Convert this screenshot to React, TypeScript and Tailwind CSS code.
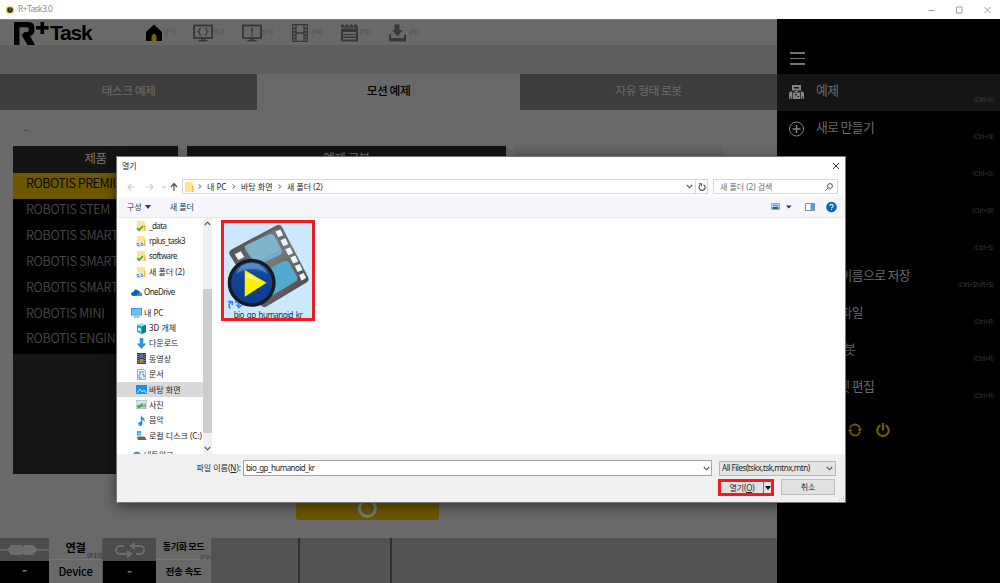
import React from "react";

const KR = "font-['Noto_Sans_CJK_KR','Noto_Sans',sans-serif]";
const UI = "font-['Noto_Sans','Noto_Sans_CJK_KR',sans-serif]";

function TitleBar() {
  return (
    <header className={`flex h-[19px] shrink-0 items-center bg-white ${UI}`}>
      <svg className="ml-[6px] h-[8px] w-[8px]" viewBox="0 0 8 8">
        <rect y="0.5" width="8" height="7" rx="2" fill="#f0d040" />
        <circle cx="4" cy="4" r="2.8" fill="#23262c" />
        <path d="M3.4 3h2M3.4 4.4h1.2" stroke="#bbb" strokeWidth=".8" />
      </svg>
      <span className="ml-[4px] whitespace-nowrap text-[8.5px] leading-none tracking-[-0.6px] text-[#8d8d8d]">R+Task3.0</span>
      <svg className="ml-auto h-[10px] w-[72px]" viewBox="0 0 72 10" fill="none" stroke="#9a9a9a" strokeWidth="1">
        <path d="M.5 5.5h6M28.5 2h5.500v6h-5.500zM56.500 2l6 6M62.500 2l-6 6" />
      </svg>
    </header>
  );
}

function Monitor({ children }: { children: React.ReactNode }) {
  return (
    <svg className="h-[18px] w-[20px]" viewBox="0 0 20 18" fill="none" stroke="#383838">
      <rect x="1" y="1.500" width="18" height="12.500" strokeWidth="1.800" />
      <path d="M8 15h4M5.500 16.700h9" strokeWidth="1.400" />
      {children}
    </svg>
  );
}

function ToolItem({ children, label }: { children: React.ReactNode; label: string }) {
  return (
    <div className="flex w-[48.800px] items-center">
      <div className="flex w-[20px] justify-center">{children}</div>
      <span className="ml-[1px] whitespace-nowrap text-[6.200px] leading-none tracking-[-0.1px] text-[#505050]">{label}</span>
    </div>
  );
}

function Toolbar() {
  return (
    <div className={`flex h-[26px] shrink-0 items-center border-t border-[#858585] bg-[#696969] ${UI}`}>
      <div className="ml-[13px] flex h-full w-[131px] items-start">
        <svg className="mt-[2px] h-[23px] w-[36px]" viewBox="0 0 36 23">
          <path fillRule="evenodd" fill="#000" d="M1 0h14.500q6 0 6 6v2q0 5-4.500 6l5 9h-7.500L8.500 13l3-3h2.500q1.700 0 1.700-1.700V7q0-1.700-1.700-1.700H6.500V23H1z" />
          <path d="M23 5.800h12.500M29.300 0v12" stroke="#000" strokeWidth="3.600" />
        </svg>
        <span className="ml-[1px] mt-[1px] font-['Liberation_Sans',sans-serif] text-[21px] font-bold leading-[23px] tracking-[-1.2px] text-black">Task</span>
      </div>
      <ToolItem label="(F1)">
        <svg className="h-[18px] w-[16px]" viewBox="0 0 16 18"><path d="M8 .5L16 8v9H0V8z" fill="#000" /><path d="M5.500 17v-5.500l2.500-2 2.500 2V17z" fill="#7b6200" /></svg>
      </ToolItem>
      <ToolItem label="(F2)"><Monitor><path d="M8 4q-1.500 0-1.500 1.500T5.300 7.600q1.200.5 1.200 2T8 11.300M12 4q1.500 0 1.500 1.500t1.200 2.100q-1.200.5-1.200 2T12 11.300" strokeWidth="1.200" /></Monitor></ToolItem>
      <ToolItem label="(F3)"><Monitor><path d="M10 3.700v5.300M10 10v1.500" strokeWidth="1.500" /></Monitor></ToolItem>
      <ToolItem label="(F4)">
        <svg className="h-[18px] w-[16px]" viewBox="0 0 16 18" fill="none" stroke="#383838"><path d="M.7.700h14.600v16.600H.7zM4 1v16M12 1v16M4 9h8M.5 4.500H4M.5 8H4M.5 11H4M.5 14H4M12 4.500h3.500M12 8h3.500M12 11h3.500M12 14h3.500" strokeWidth="1.300" /></svg>
      </ToolItem>
      <ToolItem label="(F5)">
        <svg className="h-[18px] w-[17px]" viewBox="0 0 17 18"><path fill="#383838" fillRule="evenodd" d="M0 .5h2l1.500 2 1.500-2h1.500l1.500 2 1.500-2H11l1.500 2 1.500-2h1.500l1.500 2v15H0zM0 3.500h15v1H0zM2 8v2h13V8zM2 11v1.500h13V11zM2 14v1.500h13V14z" /></svg>
      </ToolItem>
      <ToolItem label="(F6)">
        <svg className="h-[18px] w-[17px]" viewBox="0 0 17 18" fill="#383838"><path d="M5.500.500h5v5.500h3.500l-5.500 6L3 6h2.500zM0 10.500h2v3.500h13v-3.500h2V17.500H0z" /></svg>
      </ToolItem>
    </div>
  );
}

function ExampleTabs() {
  return (
    <div className={`flex h-[36px] shrink-0 text-[11.800px] leading-[32px] tracking-[-0.5px] text-[#6c6c6c] ${KR}`}>
      <div className="w-[257px] bg-[#3d3d3d] text-center">태스크 예제</div>
      <div className="w-[263px] bg-[#696969] text-center font-medium text-black">모션 예제</div>
      <div className="w-[257px] bg-[#3d3d3d] text-center">자유 형태 로봇</div>
    </div>
  );
}

const products = ["ROBOTIS STEM", "ROBOTIS SMART", "ROBOTIS SMART", "ROBOTIS SMART", "ROBOTIS MINI", "ROBOTIS ENGINEER"];

function Content() {
  return (
    <div className={`flex h-[428px] shrink-0 flex-col bg-[#696969] ${KR}`}>
      <div className="flex h-[36px] items-center"><div className="ml-[23px] mt-[4px] h-px w-[6px] bg-[#4f4f4f]" /></div>
      <div className="flex h-[328px] gap-[9px] pl-[13px]">
        <div className="w-[165px] overflow-hidden whitespace-nowrap bg-[#161616] text-[12.500px] leading-[20px]">
          <div className="h-[27px] bg-[#141414] text-center text-[12.500px] leading-[24px] tracking-[-0.5px] text-[#777]">제품</div>
          <div className="h-[26px] bg-[#6d5700] pl-[13px] tracking-[-0.500px] text-[#0c0a00]">ROBOTIS PREMIUM</div>
          {products.map((p, i) => (
            <div key={i} className="h-[25.900px] border-b border-[#020202] bg-black pl-[13px] tracking-[-0.250px] font-[350] text-[#484848]">{p}</div>
          ))}
        </div>
        <div className="h-[27px] w-[319px] bg-[#141414] text-center text-[12.500px] leading-[24px] tracking-[-0.5px] text-[#777]">예제 로봇</div>
        <div className="h-[190px] w-[208px] bg-[#646464]" />
      </div>
      <div className="ml-[296px] flex h-[46px] w-[143px] items-center justify-center rounded-[3px] bg-[#6b5600] pt-[22px]">
        <div className="h-[19px] w-[19px] rounded-full border-[3px] border-[#777]" />
      </div>
    </div>
  );
}

function StatusBar() {
  return (
    <footer className={`flex h-[45px] shrink-0 bg-[#535353] text-center font-bold text-black ${KR}`}>
      <div className="flex w-[49px] flex-col">
        <div className="flex h-[23px] items-center bg-[#4b4b4b]">
          <svg className="h-[12px] w-[49px]" viewBox="0 0 49 12" fill="#6d6d6d"><path d="M0 5h8l3-4h10l2 1.500 2-1.500h8l4 4h12v1.500H37L33 11h-8l-2-1-2 1H11L8 6.500H0z" /></svg>
        </div>
        <div className="h-[22px] bg-black text-[14px] leading-[17px] text-[#777]">-</div>
      </div>
      <div className="flex w-[54px] flex-col border-r border-[#555] bg-[#696969]">
        <div className="relative h-[22px] border-b border-[#777] text-[11.200px] leading-[19px] tracking-[-0.3px]">
          연결<span className="absolute -right-px bottom-[-2px] text-[6.800px] font-normal leading-[11px] tracking-normal text-[#282828]">(F10)</span>
        </div>
        <div className="text-[11.200px] font-medium leading-[22px] tracking-[-0.2px]">Device</div>
      </div>
      <div className="flex w-[53px] flex-col">
        <div className="flex h-[23px] items-center justify-center bg-[#4b4b4b]">
          <svg className="h-[16px] w-[30px]" viewBox="0 0 30 16" fill="none" stroke="#6d6d6d" strokeWidth="2"><path d="M9 4H5a3.700 3.700 0 0 0 0 8h9M21 12h4a3.700 3.700 0 0 0 0-8h-8" /><path d="M12 8l6 4-6 4zM20 0l-6 4 6 4z" fill="#6d6d6d" stroke="none" /></svg>
        </div>
        <div className="h-[22px] bg-black text-[14px] leading-[18px] text-[#777]">-</div>
      </div>
      <div className="flex w-[55px] flex-col bg-[#696969]">
        <div className="relative h-[22px] whitespace-nowrap border-b border-[#777]">
          <div className="text-[9px] leading-[18px] tracking-[-0.350px]">동기화 모드</div>
          <span className="absolute right-0 bottom-[-2px] text-[6.500px] font-normal leading-[8px] text-[#383838]">(F9)</span>
        </div>
        <div className="whitespace-nowrap text-[9.600px] leading-[22px] tracking-[-0.3px]">전송 속도</div>
      </div>
      <div className="w-[89px] border-r-2 border-[#303030]" />
      <div className="w-[92px] border-r-2 border-[#303030]" />
    </footer>
  );
}

const menu: [string, string][] = [
  ["예제", "(Ctrl+E)"],
  ["새로 만들기", "(Ctrl+N)"],
  ["열기", "(Ctrl+O)"],
  ["닫기", "(Ctrl+W)"],
  ["저장", "(Ctrl+S)"],
  ["다른 이름으로 저장", "(Ctrl+Shift+S)"],
  ["최근 파일", "(Ctrl+R)"],
  ["3D 로봇", "(Ctrl+R)"],
  ["오프셋 편집", "(Ctrl+R)"],
];

function MenuIcon({ index }: { index: number }) {
  if (index === 0)
    return (
      <svg className="h-[15px] w-[15px]" viewBox="0 0 15 15" fill="#858585">
        <path fillRule="evenodd" d="M3 1h9v5.500H3zM5 3v1.500h5V3zM6 7h3v1H6zM4 8.500h7V15H4zM6 10v1.500h1.500V10zM8.500 12v1H10v-1zM0 15V9.500Q0 7.500 2 7.500h1.300V15zM11.700 15V7.500H13q2 0 2 2V15zM1.300 12.500V15h.8v-2.500zM12.900 12.500V15h.8v-2.500z" />
      </svg>
    );
  if (index === 1)
    return <svg className="h-[16px] w-[15px]" viewBox="0 0 15 16" fill="none" stroke="#858585"><circle cx="7.500" cy="8" r="7" /><path d="M3.500 8h8M7.500 4v8" strokeWidth="1.400" /></svg>;
  return null;
}

function SideMenu() {
  return (
    <nav className={`flex w-[223px] flex-col bg-black ${KR}`}>
      <div className="flex h-[55px] flex-col gap-[4px] pl-[12.500px] pt-[33px]">
        <div className="h-[1.500px] w-[15px] shrink-0 bg-[#737373]" />
        <div className="h-[1.500px] w-[15px] shrink-0 bg-[#737373]" />
        <div className="h-[1.500px] w-[15px] shrink-0 bg-[#737373]" />
      </div>
      {menu.map(([name, key], i) => (
        <div key={i} className={`flex h-[37px] shrink-0 justify-between whitespace-nowrap pl-[12px] pr-[6px] ${i === 0 ? "bg-[#151515]" : ""}`}>
          <div className="flex">
            <div className="w-[27px] pt-[10px]"><MenuIcon index={i} /></div>
            <span className="text-[12.800px] leading-[32px] tracking-[-0.600px] text-[#6c6c6c]">{name}</span>
          </div>
          <span className="pt-[20px] text-[6.500px] font-light leading-[11px] tracking-[-0.150px] text-[#5c5c5c]">{key}</span>
        </div>
      ))}
      <div className="flex gap-[14px] pl-[71px] pt-[16px]">
        <svg className="h-[14px] w-[14px]" viewBox="0 0 14 14" fill="none" stroke="#725c05" strokeWidth="1.900"><path d="M4 2.300A5.500 5.500 0 0 1 12.200 6.500M10 11.700A5.500 5.500 0 0 1 1.800 7.500M3.800 2.600A5 5 0 0 0 2 5M10.200 11.400A5 5 0 0 0 12 9" /><path d="M9.500 6h4.500l-2.200 3zM0 8l2.200-3 2.300 3z" fill="#725c05" stroke="none" /></svg>
        <svg className="h-[14px] w-[14px]" viewBox="0 0 14 14" fill="none" stroke="#725c05" strokeWidth="2.100"><path d="M4.400 2.300a5.700 5.700 0 1 0 5.200 0M7 0v7.500" /></svg>
      </div>
    </nav>
  );
}

function Folder({ mark }: { mark?: "check" | "sync" }) {
  return (
    <svg className="h-[12px] w-[10px] shrink-0" viewBox="0 0 10 12">
      <path d="M1 1h7l1 1v9H1z" fill="#ffe391" /><path d="M8 5h1.500v6H8z" fill="#eabe50" />
      {mark === "check" && <path d="M1 8l2 2 4-4" stroke="#32a43b" strokeWidth="1.600" fill="none" />}
      {mark === "sync" && <><path d="M0 6.500h8V12H0z" fill="#f4f3eb" /><path d="M1.800 11V8.200M.6 9.200l1.200-1.300L3 9.200M1.800 10.800h2.400M6.200 7.800v3M5 9.600l1.200 1.300 1.200-1.300M6.200 8H4.400" stroke="#3978dd" strokeWidth=".9" fill="none" /></>}
    </svg>
  );
}

function TreeIcon({ kind }: { kind: string }) {
  if (kind === "check" || kind === "sync") return <Folder mark={kind} />;
  return (
    <svg className="h-[11px] w-[11px] shrink-0" viewBox="0 0 11 11">
      {kind === "cloud" && <><path d="M2.500 9Q0 9 0 7t2.500-2.200Q4 1 7 3.500q2 .3 2 2Q11 6 11 7.500T9 9z" fill="#0a62bd" /><path d="M4 9l5-3.500q2 .5 2 2T9 9z" fill="#299be8" /></>}
      {kind === "pc" && <><path d="M0 1h11v7.500H0z" fill="#3691d0" /><path d="M.8 1.800h9.400v6H.8z" fill="#67c1f4" /><path d="M2.500 10h6" stroke="#66869b" /></>}
      {kind === "cube" && <><path d="M1 2l5-1.500L10 2v7l-4 2-5-2z" fill="#1bacc7" /><path d="M1 2l5-1.500L10 2 6 3.500z" fill="#8be6ef" /><path d="M6 3.500L10 2v7l-4 2z" fill="#087e9a" /><path d="M2 4.500l3 1v3l-3-1z" fill="#c3f4f4" /></>}
      {kind === "down" && <path d="M3.700 0h3.600v5.500h3L5.500 11 .7 5.500h3z" fill="#3391de" />}
      {kind === "film" && <><path d="M1 0h9v11H1z" fill="#384047" /><path d="M3.500 1h4v4h-4z" fill="#4b76aa" /><path d="M3.500 6h4v4h-4z" fill="#a88a43" /><path d="M2 1v9M9 1v9" stroke="#bbb" strokeDasharray="1 1" /></>}
      {kind === "doc" && <><path d="M1.500.500h6l2 2v8h-8z" fill="#eef6fd" stroke="#8db4d5" /><path d="M3 3h5M3 5h2M6.500 5.500H8v3M3 6v3h2.500" stroke="#3b80d8" fill="none" /></>}
      {kind === "desk" && <><path d="M0 1h11v9H0z" fill="#1493e8" /><path d="M1 9l3-4 2 3 2-2 2 3" stroke="#c9ebff" fill="none" /></>}
      {kind === "pic" && <><path d="M0 1.500h11v8H0z" fill="#d6e6e6" stroke="#a2adb2" strokeWidth=".7" /><path d="M1 7l3-2 3 1 3-2v4.500H1z" fill="#8bb88c" /><path d="M1.500 6.500l1.500 2 4-4" stroke="#389a48" strokeWidth="1.300" fill="none" /></>}
      {kind === "music" && <><path d="M4.800 8.500V0q.5 2 3 3.300Q9.500 5 8 7.500 8.500 5 6.300 4.500v4.500z" fill="#1794e4" /><circle cx="4.300" cy="8.800" r="2.100" fill="#1794e4" /></>}
      {kind === "disk" && <><path d="M1 1h1.800v2H1zM3.300 1h1.800v2H3.300zM1 3.500h1.800v2H1zM3.300 3.500h1.800v2H3.300z" fill="#2498e0" /><path d="M1 7h8l1.500 3H2z" fill="#5d6467" /><path d="M1.500 6.500h7" stroke="#bbb" /></>}
      {kind === "net" && <><circle cx="6" cy="5.500" r="4" fill="#4d9dc7" /><path d="M2 5h8" stroke="#a9d8ec" /></>}
    </svg>
  );
}

const tree: [string, string][] = [
  ["3D 개체", "cube"], ["다운로드", "down"], ["동영상", "film"], ["문서", "doc"], ["바탕 화면", "desk"], ["사진", "pic"], ["음악", "music"], ["로컬 디스크 (C:)", "disk"],
];
const folders: [string, string][] = [["_data", "check"], ["rplus_task3", "sync"], ["software", "check"], ["새 폴더 (2)", "sync"]];

function TreeRow({ name, kind, root = false }: { name: string; kind: string; root?: boolean }) {
  const latin = /^[\w]+$/.test(name);
  const folder = kind === "check" || kind === "sync";
  return (
    <div className={`flex h-[15.400px] shrink-0 items-center whitespace-nowrap ${folder ? "gap-[3px]" : "gap-[2px]"} ${root ? "pl-[14px]" : "pl-[19px]"} ${kind === "desk" ? "bg-[#d9d9d9]" : ""}`}>
      <TreeIcon kind={kind} />
      <span className={latin ? "tracking-[-0.600px]" : ""}>{name}</span>
    </div>
  );
}

function Chevron({ className = "" }: { className?: string }) {
  return <svg className={`h-[5px] w-[7px] shrink-0 ${className}`} viewBox="0 0 7 5" fill="none" stroke="#555" strokeWidth="1.100"><path d="M.8 1l2.700 2.800L6.200 1" /></svg>;
}

function Crumb() {
  return <svg className="h-[5px] w-[4px] shrink-0" viewBox="0 0 4 5" fill="none" stroke="#444"><path d="M.8.500l2 2-2 2" /></svg>;
}

function VideoFile() {
  return (
    <div className="ml-[9px] mt-[2px] flex h-[101px] w-[94px] flex-col items-center overflow-hidden border-[3px] border-[#ed1c24] bg-[#cce8ff]">
      <svg className="h-[87px] w-[88px] shrink-0" viewBox="0 0 89 87">
        <defs>
          <linearGradient id="reel" x1="0" y1="0" x2="1" y2="1"><stop offset="0" stopColor="#444" /><stop offset=".5" stopColor="#777" /><stop offset="1" stopColor="#3f3f3f" /></linearGradient>
          <linearGradient id="disc" x1="0" y1="0" x2="0" y2="1"><stop offset="0" stopColor="#3974bf" /><stop offset=".3" stopColor="#12449b" /><stop offset="1" stopColor="#0e3c91" /></linearGradient>
        </defs>
        <path d="M8 26L53 2q4-2 6 2l26 50q2 4-2 6L43 84q-4 2-6-2L6 32q-2-4 2-6z" fill="url(#reel)" />
        <path d="M22 22L46 11q3-1 5 2l7 13q2 4-2 6L36 42q-3 1-5-2l-9-13q-2-3 0-5z" fill="#70adc7" />
        <path d="M42 47l19-9q3-1 5 2l8 14q1 3-2 5L50 72q-3 1-5-3l-6-16q-1-4 3-6z" fill="#55a9cd" />
        <path d="M52 8l5-2 3 6-5 2zM57 17l5-2 3 6-5 2zM62 26l5-2 3 6-5 2zM67 34.500l5-2 3 6-5 2zM71.500 43l5-2 3 6-5 2zM76 52l4.500-2 2.500 5-4.500 3zM11 31l6-3 3.500 6-6 3z" fill="#eef7ff" />
        <path d="M22 22L53 5l5 21-27 14z" fill="#fff" opacity=".1" />
        <circle cx="28" cy="60" r="22.500" fill="url(#disc)" stroke="#171a21" strokeWidth="3.500" />
        <path d="M12 51Q17 40 28 40t16 11q-7-5-16-5t-16 5z" fill="#77a7d8" opacity=".55" />
        <path d="M21 47l22 13-22 14z" fill="#fff100" /><path d="M23 51l14 8-14-4z" fill="#fff" opacity=".65" />
        <path d="M8 79q-5 3-1.500 7M4 79h4.500v3.500M11 79q5 .5 4 5.500M12.500 82l2.500 3 3-2.500" stroke="#4881e8" strokeWidth="1.600" fill="none" />
      </svg>
      <span className="whitespace-nowrap text-[8px] leading-[9px] tracking-[-0.550px] text-[#26313b]">bio_gp_humanoid_kr</span>
    </div>
  );
}

function OpenDialog() {
  return (
    <section className={`absolute left-[116px] top-[156px] flex h-[347px] w-[730px] flex-col border border-[#777] bg-white text-[8px] leading-none text-[#272727] shadow-[0_3px_12px_rgba(0,0,0,0.5)] ${UI}`}>
      <div className="flex h-[20px] shrink-0 items-center justify-between pb-[2px] pl-[5px] pr-[5px]">
        <span>열기</span>
        <svg className="h-[8px] w-[8px]" viewBox="0 0 8 8" stroke="#333"><path d="M1 1l6 6M7 1L1 7" /></svg>
      </div>
      <div className="flex h-[20px] shrink-0 items-center pb-[1px]">
        <svg className="ml-[7px] h-[10px] w-[56px]" viewBox="0 0 56 10" fill="none" strokeWidth="1.200"><path d="M11 5H4M7 2L4 5l3 3M22 5h7M26 2l3 3-3 3M38 4l1.800 2L41.600 4" stroke="#cfcfcf" /><path d="M50 9V2M47 5l3-3.500L53 5" stroke="#505050" /></svg>
        <div className="ml-[2px] flex h-[15px] w-[526px] items-center whitespace-nowrap border border-[#d9d9d9] pl-[1px]">
          <Folder />
          <span className="ml-[4px] flex"><Crumb /></span>
          <span className="ml-[5px] w-[21px]">내 PC</span>
          <span className="ml-[4px] flex"><Crumb /></span>
          <span className="ml-[5px] w-[33px]">바탕 화면</span>
          <span className="ml-[4px] flex"><Crumb /></span>
          <span className="ml-[5px]">새 폴더 (2)</span>
          <Chevron className="ml-auto mr-[2px]" />
          <div className="flex h-full w-[12px] items-center justify-center border-l border-[#d9d9d9]">
            <svg className="h-[8px] w-[8px]" viewBox="0 0 8 8" fill="none" stroke="#555" strokeWidth="1.200"><path d="M5.500 1.800a3 3 0 1 1-3.500.5M1 .8h2.500v2.500" /></svg>
          </div>
        </div>
        <div className="ml-[5px] flex h-[15px] w-[125px] items-center justify-between border border-[#d9d9d9] pl-[6px] pr-[4px] text-[#707070]">
          <span>새 폴더 (2) 검색</span>
          <svg className="h-[8px] w-[8px]" viewBox="0 0 8 8" fill="none" stroke="#555"><circle cx="5" cy="3" r="2.400" /><path d="M3 5L.5 7.500" /></svg>
        </div>
      </div>
      <div className="flex h-[21px] shrink-0 items-center border-b border-[#e7eaed] bg-[#f4f6f9] pl-[10px] text-[#273852]">
        <span>구성</span>
        <svg className="ml-[3px] h-[4px] w-[6px]" viewBox="0 0 6 4"><path d="M0 0h6L3 4z" fill="#273852" /></svg>
        <span className="ml-[19px]">새 폴더</span>
        <svg className="ml-auto mr-[8px] h-[12px] w-[66px]" viewBox="0 0 66 12"><path d="M.5 2.500h8v6h-8z" fill="#eef" stroke="#a0a8b0" /><path d="M1.500 3.500h6v2h-6z" fill="#4ba7e5" /><path d="M1.500 6h6v2h-6z" fill="#315f63" /><path d="M15 4.500h5.500l-2.700 3z" fill="#1f3158" /><path d="M34.500 2.500h9v7h-9z" fill="#fff" stroke="#8c8c8c" /><path d="M39.500 3h4v6h-4z" fill="#44a2e6" /><circle cx="60.500" cy="6" r="5.300" fill="#0b65bf" /><path d="M59 5q0-1.700 1.600-1.700T62.200 5q0 .8-1 1.200-.7.300-.7 1M60.500 8v1" stroke="#fff" fill="none" strokeWidth="1.100" /></svg>
      </div>
      <div className="flex h-[236px] shrink-0">
        <div className="flex w-[86px] flex-col overflow-hidden pt-0">
          {folders.map(([n, k]) => <TreeRow key={n} name={n} kind={k} />)}
          <div className="h-[5px] shrink-0" />
          <TreeRow name="OneDrive" kind="cloud" root />
          <div className="h-[5px] shrink-0" />
          <TreeRow name="내 PC" kind="pc" root />
          {tree.map(([n, k]) => <TreeRow key={n} name={n} kind={k} />)}
          <div className="h-[4px] shrink-0" />
          <TreeRow name="네트워크" kind="net" root />
        </div>
        <div className="flex w-[9px] flex-col items-center bg-[#f0f0f0] pb-[3px] pt-[3px]">
          <Chevron className="rotate-180" />
          <div className="mt-[63px] h-[144px] w-full bg-[#cdcdcd]" />
          <Chevron className="mt-auto" />
        </div>
        <VideoFile />
      </div>
      <div className="relative flex min-h-0 grow flex-col bg-[#f0f0f0]">
        <div className="flex items-center pt-[6px]">
          <span className="w-[124px] whitespace-nowrap text-right">파일 이름(<u>N</u>):</span>
          <div className="ml-[2px] flex h-[16px] w-[469px] items-center justify-between border border-[#a5a5a5] bg-white pl-[2px] pr-[1px]">
            <span className="tracking-[-0.550px]">bio_gp_humanoid_kr</span><Chevron />
          </div>
          <div className="ml-[7px] flex h-[15px] w-[117px] items-center justify-between whitespace-nowrap border border-[#b5b5b5] bg-[#e4e4e4] pl-[2px] pr-[2px]">
            <span className="tracking-[-0.450px]">All Files(tskx,tsk,mtnx,mtn)</span><Chevron />
          </div>
        </div>
        <div className="flex gap-[7px] pl-[601px] pt-[3px]">
          <div className="flex h-[17px] w-[56px] items-center border-[3px] border-[#ed1c24] bg-[#e2e2e2]">
            <span className="grow text-center tracking-[-0.200px]">열기(<u>O</u>)</span>
            <div className="flex h-full w-[8px] items-center justify-center border-l border-[#777]"><svg className="h-[4px] w-[6px]" viewBox="0 0 6 4"><path d="M0 0h6L3 4z" /></svg></div>
          </div>
          <div className="flex h-[16px] w-[54px] items-center justify-center border border-[#bdbdbd] bg-[#e1e1e1]">취소</div>
        </div>
        <svg className="absolute bottom-0 right-0 h-[7px] w-[7px]" viewBox="0 0 7 7" fill="#bcbcbc"><path d="M5 1h1v1H5zM3 3h1v1H3zM5 3h1v1H5zM1 5h1v1H1zM3 5h1v1H3zM5 5h1v1H5z" /></svg>
      </div>
    </section>
  );
}

export default function App() {
  return (
    <div className="relative flex h-[583px] w-[1000px] flex-col overflow-hidden">
      <TitleBar />
      <div className="flex grow">
        <main className="flex w-[777px] flex-col">
          <Toolbar />
          <div className="h-[29px] shrink-0 bg-[#5f5f5f]" />
          <ExampleTabs />
          <Content />
          <StatusBar />
        </main>
        <SideMenu />
      </div>
      <OpenDialog />
    </div>
  );
}
